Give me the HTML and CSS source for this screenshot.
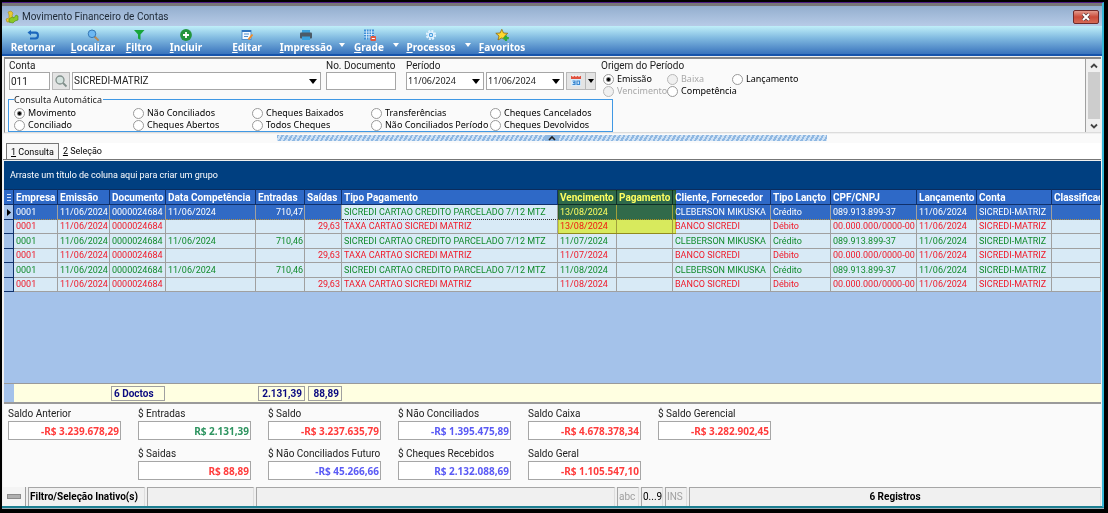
FILE: index.html
```html
<!DOCTYPE html>
<html lang="pt-BR">
<head>
    <meta charset="UTF-8">
    <meta name="viewport" content="width=device-width, initial-scale=1.0">
    <title>Movimento Financeiro de Contas</title>
    <link rel="stylesheet" href="styles.css">
</head>
<body>

<div class="window">
    <!-- Barra de título -->
    <header class="titlebar">
        <svg class="title-icon" viewBox="0 0 14 14">
            <path d="M1 9 L4 8 V5 L3 2 L6 1 L8 3 L7 6 L9 8 L6 12 L2 12 Z" fill="#e9c92f" stroke="#a98d1b" stroke-width=".6"/>
            <path d="M4 9 L7 7 L9 8 L11 5 L13 6 V10 L10 11 L8 13 L4 12 Z" fill="#8ac926" stroke="#4c8a14" stroke-width=".6"/>
        </svg>
        <h1>Movimento Financeiro de Contas</h1>
        <button class="close" aria-label="Fechar">
            <svg viewBox="0 0 10 8"><path d="M2 1 L8 7 M8 1 L2 7" stroke="#5b3a3a" stroke-width="3.4"/><path d="M2 1 L8 7 M8 1 L2 7" stroke="#fff" stroke-width="2"/></svg>
        </button>
    </header>

    <!-- Barra de ferramentas -->
    <nav class="toolbar">
        <button class="tool">
            <svg viewBox="0 0 14 12"><path d="M5 1 L1.500 3.500 L5 6.500 V4.800 H9.500 Q11 4.800 11 6.500 Q11 8.500 9 8.500 H4 V10.500 H9.500 Q13 10.300 13 6.500 Q13 2.600 9.500 2.600 H5 Z" fill="#1c67bd"/></svg>
            <span>Retornar</span>
        </button>
        <button class="tool">
            <svg viewBox="0 0 14 12"><path d="M8.500 7.500 L12 11" stroke="#b98a55" stroke-width="2" stroke-linecap="round"/><circle cx="6" cy="4.800" r="3.800" fill="#6db8f2" stroke="#3577b5"/></svg>
            <span><u>L</u>ocalizar</span>
        </button>
        <button class="tool">
            <svg viewBox="0 0 14 12"><path d="M2 1 H12.500 L8.500 5.500 V11 L6 9.500 V5.500 Z" fill="#17a53a"/></svg>
            <span><u>F</u>iltro</span>
        </button>
        <button class="tool">
            <svg viewBox="0 0 14 12"><circle cx="7" cy="6" r="5.900" fill="#23953c"/><path d="M7 3 V9 M4 6 H10" stroke="#fff" stroke-width="1.800"/></svg>
            <span><u>I</u>ncluir</span>
        </button>
        <button class="tool">
            <svg viewBox="0 0 14 12"><rect x="2" y="1.500" width="9" height="9" fill="#f4f9ff" stroke="#4f8fd0"/><path d="M2 2 H11" stroke="#2f74c0" stroke-width="2"/><path d="M4 5 H9 M4 7.500 H8" stroke="#4f8fd0"/><path d="M12.500 5.500 L8.500 10.500" stroke="#f28c28" stroke-width="2"/></svg>
            <span><u>E</u>ditar</span>
        </button>
        <button class="tool">
            <svg viewBox="0 0 14 12"><rect x="3" y="1" width="8" height="3" fill="#3a9ed8"/><rect x="1" y="3.500" width="12" height="6" rx="1" fill="#4b5a66"/><rect x="3" y="7.500" width="8" height="3.500" fill="#39a0dc"/></svg>
            <span><u>I</u>mpressão</span>
        </button>
        <button class="drop" aria-label="Opções de impressão"></button>
        <button class="tool">
            <svg viewBox="0 0 14 12"><rect x="2" y=".5" width="10" height="10" fill="#3d8fd8"/><path d="M2 3 H12 M2 5.500 H12 M2 8 H12 M4.500 .5 V10.500 M7 .5 V10.500 M9.500 .5 V10.500" stroke="#dff0fc" stroke-width=".8"/><rect x="8.500" y="7" width="5.500" height="5" rx="1" fill="#e2563c"/><path d="M9.800 9.500 H12.800" stroke="#fff"/></svg>
            <span><u>G</u>rade</span>
        </button>
        <button class="drop" aria-label="Opções de grade"></button>
        <button class="tool">
            <svg viewBox="0 0 14 12"><circle cx="7" cy="6" r="4.300" fill="none" stroke="#e6f4ff" stroke-width="1.600" stroke-dasharray="2 1.370"/><circle cx="7" cy="6" r="2.900" fill="#4da0e0" stroke="#e6f4ff" stroke-width="1.400"/><circle cx="7" cy="6" r="1.100" fill="#e6f4ff"/></svg>
            <span><u>P</u>rocessos</span>
        </button>
        <button class="drop" aria-label="Opções de processos"></button>
        <button class="tool">
            <svg viewBox="0 0 14 12"><path d="M6.800 .3 L8.500 4 L12.800 4.300 L9.600 7 L10.700 11 L6.800 8.900 L3 11 L4 7 L.8 4.300 L5.100 4 Z" fill="#ffd92e" stroke="#8f6a12" stroke-width=".8"/><path d="M11 6.500 V12 M8.300 9.200 H13.800" stroke="#2fae3a" stroke-width="2.200"/></svg>
            <span><u>F</u>avoritos</span>
        </button>
    </nav>

    <!-- Filtros -->
    <section class="filters">
        <form class="filter-form">
            <div class="fields">
                <div class="field account">
                    <label for="conta">Conta</label>
                    <div class="row">
                        <input type="text" id="conta" value="011">
                        <button type="button" class="search" aria-label="Procurar conta">
                            <svg viewBox="0 0 14 14"><circle cx="6" cy="6" r="4" fill="#d5e3df" stroke="#82908c" stroke-width="1.300"/><path d="M9 9 L12.500 12.500" stroke="#82908c" stroke-width="1.800"/></svg>
                        </button>
                        <div class="combo combo-name">
                            <select aria-label="Nome da conta"><option>SICREDI-MATRIZ</option></select>
                        </div>
                    </div>
                </div>
                <div class="field document">
                    <label for="documento">No. Documento</label>
                    <input type="text" id="documento">
                </div>
                <div class="field period">
                    <label for="inicio">Período</label>
                    <div class="row">
                        <div class="combo combo-date">
                            <select id="inicio"><option>11/06/2024</option></select>
                        </div>
                        <div class="combo combo-date">
                            <select aria-label="Data final"><option>11/06/2024</option></select>
                        </div>
                        <button type="button" class="calendar" aria-label="Calendário">
                            <svg viewBox="0 0 12 12"><rect x="1" y="1" width="10" height="10" fill="#d9ecfb"/><rect x="1" y="1" width="10" height="3" fill="#e0523f"/><path d="M3 0 V2 M6 0 V2 M9 0 V2" stroke="#fff"/><path d="M2.500 6 H5 V9.500 H2.500 M3 7.700 H5 M7 6 H9.500 V9.500 H7 Z" fill="none" stroke="#3a87d0" stroke-width="1.200"/></svg>
                        </button>
                        <button type="button" class="calendar-drop" aria-label="Mais períodos"></button>
                    </div>
                </div>
                <fieldset class="origin">
                    <legend>Origem do Período</legend>
                    <label class="radio"><input type="radio" name="origem" checked><span>Emissão</span></label>
                    <label class="radio off"><input type="radio" name="origem" disabled><span>Baixa</span></label>
                    <label class="radio"><input type="radio" name="origem"><span>Lançamento</span></label>
                    <label class="radio off"><input type="radio" name="origem" disabled><span>Vencimento</span></label>
                    <label class="radio"><input type="radio" name="origem"><span>Competência</span></label>
                </fieldset>
            </div>
            <fieldset class="auto-query">
                <legend>Consulta Automática</legend>
                <label class="radio"><input type="radio" name="consulta" checked><span>Movimento</span></label>
                <label class="radio"><input type="radio" name="consulta"><span>Não Conciliados</span></label>
                <label class="radio"><input type="radio" name="consulta"><span>Cheques Baixados</span></label>
                <label class="radio"><input type="radio" name="consulta"><span>Transferências</span></label>
                <label class="radio"><input type="radio" name="consulta"><span>Cheques Cancelados</span></label>
                <label class="radio"><input type="radio" name="consulta"><span>Conciliado</span></label>
                <label class="radio"><input type="radio" name="consulta"><span>Cheques Abertos</span></label>
                <label class="radio"><input type="radio" name="consulta"><span>Todos Cheques</span></label>
                <label class="radio"><input type="radio" name="consulta"><span>Não Conciliados Período</span></label>
                <label class="radio"><input type="radio" name="consulta"><span>Cheques Devolvidos</span></label>
            </fieldset>
        </form>
        <div class="scrollbar">
            <svg viewBox="0 0 12 12"><path d="M3 8 L6 5 L9 8" fill="none" stroke="#444" stroke-width="1.800"/></svg>
            <div class="thumb"></div>
            <svg viewBox="0 0 12 12"><path d="M3 5 L6 8 L9 5" fill="none" stroke="#444" stroke-width="1.800"/></svg>
        </div>
    </section>

    <div class="splitter">
        <button class="handle" aria-label="Recolher filtros">
            <svg viewBox="0 0 14 6"><path d="M4 5 L7 2 L10 5" fill="none" stroke="#222" stroke-width="1.600"/></svg>
        </button>
    </div>

    <!-- Abas -->
    <div class="tabs">
        <button class="tab active"><u>1</u> Consulta</button>
        <button class="tab"><u>2</u> Seleção</button>
    </div>

    <!-- Grade -->
    <main class="grid">
        <div class="group-bar">Arraste um título de coluna aqui para criar um grupo</div>
        <div class="grid-body">
            <table>
                <colgroup>
                    <col class="c-mark"><col class="c-empresa"><col class="c-emissao"><col class="c-documento">
                    <col class="c-competencia"><col class="c-entradas"><col class="c-saidas"><col class="c-tipo">
                    <col class="c-vencimento"><col class="c-pagamento"><col class="c-cliente"><col class="c-lancto">
                    <col class="c-cpf"><col class="c-lancamento"><col class="c-conta"><col>
                </colgroup>
                <thead>
                    <tr>
                        <th class="mark"><svg viewBox="0 0 6 9"><path d="M1 1.500 H5 M1 4.500 H5 M1 7.500 H5" stroke="#cfe0ff"/></svg></th>
                        <th>Empresa</th><th>Emissão</th><th>Documento</th><th>Data Competência</th><th>Entradas</th><th>Saídas</th><th>Tipo Pagamento</th>
                        <th>Vencimento</th><th>Pagamento</th><th>Cliente, Fornecedor</th><th>Tipo Lançto</th><th>CPF/CNPJ</th><th>Lançamento</th><th>Conta</th><th>Classificação</th>
                    </tr>
                </thead>
                <tbody>
                    <tr class="credit selected">
                        <td class="mark"><svg viewBox="0 0 6 9"><path d="M1 1 L5 4.500 L1 8 Z" fill="#000"/></svg></td>
                        <td>0001</td><td>11/06/2024</td><td>0000024684</td><td>11/06/2024</td><td class="num">710,47</td><td></td><td class="focus">SICREDI CARTAO CREDITO PARCELADO 7/12 MTZ</td>
                        <td>13/08/2024</td><td></td><td>CLEBERSON MIKUSKA</td><td>Crédito</td><td>089.913.899-37</td><td>11/06/2024</td><td>SICREDI-MATRIZ</td><td></td>
                    </tr>
                    <tr class="debit">
                        <td class="mark"></td>
                        <td>0001</td><td>11/06/2024</td><td>0000024684</td><td></td><td></td><td class="num">29,63</td><td>TAXA CARTAO SICREDI MATRIZ</td>
                        <td>13/08/2024</td><td></td><td>BANCO SICREDI</td><td>Débito</td><td>00.000.000/0000-00</td><td>11/06/2024</td><td>SICREDI-MATRIZ</td><td></td>
                    </tr>
                    <tr class="credit">
                        <td class="mark"></td>
                        <td>0001</td><td>11/06/2024</td><td>0000024684</td><td>11/06/2024</td><td class="num">710,46</td><td></td><td>SICREDI CARTAO CREDITO PARCELADO 7/12 MTZ</td>
                        <td>11/07/2024</td><td></td><td>CLEBERSON MIKUSKA</td><td>Crédito</td><td>089.913.899-37</td><td>11/06/2024</td><td>SICREDI-MATRIZ</td><td></td>
                    </tr>
                    <tr class="debit">
                        <td class="mark"></td>
                        <td>0001</td><td>11/06/2024</td><td>0000024684</td><td></td><td></td><td class="num">29,63</td><td>TAXA CARTAO SICREDI MATRIZ</td>
                        <td>11/07/2024</td><td></td><td>BANCO SICREDI</td><td>Débito</td><td>00.000.000/0000-00</td><td>11/06/2024</td><td>SICREDI-MATRIZ</td><td></td>
                    </tr>
                    <tr class="credit">
                        <td class="mark"></td>
                        <td>0001</td><td>11/06/2024</td><td>0000024684</td><td>11/06/2024</td><td class="num">710,46</td><td></td><td>SICREDI CARTAO CREDITO PARCELADO 7/12 MTZ</td>
                        <td>11/08/2024</td><td></td><td>CLEBERSON MIKUSKA</td><td>Crédito</td><td>089.913.899-37</td><td>11/06/2024</td><td>SICREDI-MATRIZ</td><td></td>
                    </tr>
                    <tr class="debit">
                        <td class="mark"></td>
                        <td>0001</td><td>11/06/2024</td><td>0000024684</td><td></td><td></td><td class="num">29,63</td><td>TAXA CARTAO SICREDI MATRIZ</td>
                        <td>11/08/2024</td><td></td><td>BANCO SICREDI</td><td>Débito</td><td>00.000.000/0000-00</td><td>11/06/2024</td><td>SICREDI-MATRIZ</td><td></td>
                    </tr>
                </tbody>
            </table>
            <div class="marker"></div>
        </div>
        <div class="grid-footer">
            <span class="foot-mark"></span>
            <span class="total total-docs">6 Doctos</span>
            <span class="total total-in">2.131,39</span>
            <span class="total total-out">88,89</span>
        </div>
    </main>

    <!-- Saldos -->
    <section class="balances">
        <div class="balance"><label for="s1">Saldo Anterior</label><input type="text" id="s1" class="red" value="-R$ 3.239.678,29" readonly></div>
        <div class="balance"><label for="s2">$ Entradas</label><input type="text" id="s2" class="green" value="R$ 2.131,39" readonly></div>
        <div class="balance"><label for="s3">$ Saldo</label><input type="text" id="s3" class="red" value="-R$ 3.237.635,79" readonly></div>
        <div class="balance"><label for="s4">$ Não Conciliados</label><input type="text" id="s4" class="blue" value="-R$ 1.395.475,89" readonly></div>
        <div class="balance"><label for="s5">Saldo Caixa</label><input type="text" id="s5" class="red" value="-R$ 4.678.378,34" readonly></div>
        <div class="balance"><label for="s6">$ Saldo Gerencial</label><input type="text" id="s6" class="red" value="-R$ 3.282.902,45" readonly></div>
        <div class="balance second"><label for="s7">$ Saidas</label><input type="text" id="s7" class="red" value="R$ 88,89" readonly></div>
        <div class="balance"><label for="s8">$ Não Conciliados Futuro</label><input type="text" id="s8" class="blue" value="-R$ 45.266,66" readonly></div>
        <div class="balance"><label for="s9">$ Cheques Recebidos</label><input type="text" id="s9" class="blue" value="R$ 2.132.088,69" readonly></div>
        <div class="balance"><label for="s10">Saldo Geral</label><input type="text" id="s10" class="red" value="-R$ 1.105.547,10" readonly></div>
    </section>

    <!-- Barra de status -->
    <footer class="status">
        <button class="status-btn" aria-label="Painel"><span></span></button>
        <span class="panel strong">Filtro/Seleção Inativo(s)</span>
        <span class="panel"></span>
        <span class="panel"></span>
        <span class="panel dim">abc</span>
        <span class="panel">0...9</span>
        <span class="panel dim">INS</span>
        <span class="panel strong count">6 Registros</span>
    </footer>
</div>

</body>
</html>
```

FILE: styles.css
```css
* {
    box-sizing: border-box;
}
body {
    margin: 0;
    min-height: 100vh;
    display: flex;
    padding: 2px 4px 5px 2px;
    background-color: #000000;
    font-family: Roboto, sans-serif;
    font-size: 10px;
    line-height: 12px;
    color: #222222;
}
button, input, select {
    font: inherit;
    color: inherit;
    margin: 0;
    padding: 0;
    border: none;
    border-radius: 0;
}
button {
    background: none;
}
.window {
    flex: 1;
    min-width: 0;
    display: flex;
    flex-direction: column;
    padding: 0 1px 0 1px;
    border-top: 1px solid #4b1c86;
    border-right: 2px solid #35b6d6;
    border-bottom: 2px solid #1c7f92;
    background-color: #f0f0f0;
    box-shadow: 0 1px 0 #9fb0b8;
}

/* Título */
.titlebar {
    display: flex;
    align-items: center;
    height: 23px;
    margin: 0 -1px;
    padding: 2px 3px 0 3px;
    border-top: 3px solid #777777;
    background: linear-gradient(#93aece, #b7cbe7);
}
.title-icon {
    width: 14px;
    height: 14px;
}
.titlebar h1 {
    flex: 1;
    margin: 0 0 0 3px;
    font-size: 10px;
    font-weight: normal;
    line-height: 14px;
    color: #1c2734;
}
.close {
    display: flex;
    align-items: center;
    justify-content: center;
    width: 26px;
    height: 14px;
    border: 1px solid #6d2a2a;
    border-radius: 2px;
    background: linear-gradient(#e29a8c, #cb4b3a 50%, #d56a55);
}
.close svg {
    width: 10px;
    height: 8px;
}

/* Ferramentas */
.toolbar {
    display: grid;
    grid-template-columns: 58px 62px 30px 64px 58px 60px 12px 42px 12px 58px 16px 52px;
    height: 30px;
    margin: 0 -1px;
    padding: 3px 1px 0 2px;
    border-bottom: 2px solid #1654ab;
    background: linear-gradient(#c0eff9, #82bbe1 42%, #3a74bd);
}
.tool {
    display: flex;
    flex-direction: column;
    align-items: center;
    color: #ffffff;
    font-family: "Noto Sans", sans-serif;
    font-weight: bold;
    line-height: 12px;
    white-space: nowrap;
}
.tool svg {
    flex: none;
    width: 14px;
    height: 12px;
}
.drop {
    padding-top: 6px;
}
.drop::before, .calendar-drop::before {
    content: "";
    display: block;
    width: 0;
    margin: auto;
    border: 3px solid transparent;
    border-bottom: none;
    border-top: 4px solid #ffffff;
}

/* Filtros */
.filters {
    display: flex;
    margin: 1px 0 0 1px;
    border-top: 2px solid #8a8a8a;
    border-left: 1px solid #8a8a8a;
    border-bottom: 1px solid #dcdcdc;
    background-color: #fafafa;
}
.filter-form {
    flex: 1;
    padding-left: 3px;
}
.fields {
    display: flex;
    height: 35px;
    padding-left: 1px;
}
.field label {
    display: block;
    height: 13px;
    line-height: 14px;
}
.account {
    width: 317px;
}
.document {
    width: 80px;
}
.period {
    width: 195px;
}
.row {
    display: flex;
    gap: 2px;
}
.field input, .field select {
    height: 18px;
    padding: 0 1px;
    border: 1px solid #a6a6a6;
    background-color: #ffffff;
}
.account input {
    width: 41px;
}
.document input {
    width: 70px;
}
.search {
    display: flex;
    align-items: center;
    justify-content: center;
    width: 18px;
    height: 18px;
    border: 1px solid #b8b8b8;
    background-color: #e4e4e4;
}
.search svg {
    width: 14px;
    height: 14px;
}
.combo {
    position: relative;
}
.combo select {
    width: 100%;
    appearance: none;
}
.combo::after {
    content: "";
    position: absolute;
    top: 7px;
    right: 4px;
    border: 4px solid transparent;
    border-bottom: none;
    border-top: 5px solid #000000;
    pointer-events: none;
}
.combo-name {
    width: 249px;
}
.combo-date {
    width: 78px;
}
.combo-date select {
    font-family: "Noto Sans", sans-serif;
    font-size: 9px;
}
.calendar, .calendar-drop {
    height: 18px;
    border: 1px solid #b8b8b8;
    background-color: #e4e4e4;
}
.calendar {
    display: flex;
    align-items: center;
    justify-content: center;
    width: 20px;
}
.calendar svg {
    width: 12px;
    height: 12px;
}
.calendar-drop {
    width: 11px;
    margin-left: -3px;
}
.calendar-drop::before {
    border-top-color: #000000;
}
fieldset {
    margin: 0;
    padding: 0;
    border: none;
    min-width: 0;
}
legend {
    padding: 0;
}
.origin {
    display: grid;
    grid-template-columns: 64px 65px 90px;
    grid-auto-rows: 12px;
    height: 36px;
}
.origin legend {
    line-height: 14px;
}
.origin label {
    margin-left: 2px;
}
.auto-query {
    display: grid;
    grid-template-columns: repeat(5, 119px);
    grid-auto-rows: 12px;
    width: 605px;
    padding: 2px 0 0 5px;
    border: 1px solid #4098e4;
}
.auto-query legend {
    padding-right: 1px;
    font-family: "Noto Sans", sans-serif;
    font-size: 9px;
    line-height: 11px;
}
.radio {
    display: flex;
    align-items: center;
    gap: 3px;
    white-space: nowrap;
    font-family: "Noto Sans", sans-serif;
    font-size: 9px;
    line-height: 12px;
    color: #000000;
}
.radio input {
    flex: none;
    appearance: none;
    width: 11px;
    height: 11px;
    border: 1px solid #9a9a9a;
    border-radius: 50%;
    background-color: #ffffff;
}
.radio input:checked {
    background: radial-gradient(circle, #000000 1px, #ffffff 3px);
}
.radio.off {
    color: #a8a8a8;
}
.radio.off input {
    border-color: #b8b8b8;
    background-color: #f0f0f0;
}
.scrollbar {
    display: flex;
    flex-direction: column;
    align-items: center;
    width: 16px;
    border-left: 1px solid #a0a0a0;
    background-color: #f0f0f0;
}
.scrollbar svg {
    width: 12px;
    height: 13px;
}
.thumb {
    flex: 1;
    width: 12px;
    background-color: #cdcdcd;
}

/* Divisor */
.splitter {
    display: flex;
    justify-content: center;
    height: 9px;
    margin-top: 1px;
    padding-top: 1px;
    background-color: #fafafa;
}
.handle {
    display: flex;
    justify-content: center;
    width: 550px;
    height: 6px;
    background: repeating-linear-gradient(120deg, #8fb8e2 0 2px, #cfe2f6 2px 4px);
}
.handle svg {
    width: 14px;
    height: 6px;
    background-color: #8fb8e2;
}

/* Abas */
.tabs {
    display: flex;
    height: 17px;
    padding-left: 3px;
    border-bottom: 1px solid #777777;
    background-color: #ffffff;
}
.tab {
    padding: 0 4px;
    font-size: 9px;
    color: #000000;
}
.tab.active {
    border: 1px solid #777777;
    border-bottom: none;
    background-color: #f7f7f7;
}

/* Grade */
.grid {
    flex: 1;
    display: flex;
    flex-direction: column;
    margin: 1px 0 0 1px;
    background-color: #a4c2ea;
}
.group-bar {
    height: 28px;
    padding-left: 6px;
    background-color: #003f80;
    color: #ffffff;
    font-size: 9px;
    line-height: 29px;
}
.grid-body {
    position: relative;
    flex: 1;
    min-height: 140px;
    overflow: hidden;
}
table {
    width: 100%;
    table-layout: fixed;
    border-collapse: separate;
    border-spacing: 0;
    font-size: 9px;
}
.c-mark { width: 10px; }
.c-empresa { width: 44px; }
.c-emissao { width: 52px; }
.c-documento { width: 56px; }
.c-competencia { width: 90px; }
.c-entradas { width: 49px; }
.c-saidas { width: 37px; }
.c-tipo { width: 216px; }
.c-vencimento { width: 59px; }
.c-pagamento { width: 56px; }
.c-cliente { width: 98px; }
.c-lancto { width: 60px; }
.c-cpf { width: 86px; }
.c-lancamento { width: 60px; }
.c-conta { width: 75px; }
th, td {
    padding: 0 0 0 2px;
    overflow: hidden;
    white-space: nowrap;
    line-height: 13px;
    text-align: left;
}
th {
    height: 16px;
    border-right: 1px solid #10306a;
    border-top: 1px solid #0a2c5e;
    border-bottom: 1px solid #10306a;
    background-color: #2e69c7;
    color: #ffffff;
    font-size: 10px;
}
td {
    height: 15px;
    border-right: 1px solid #a0a0a0;
    border-bottom: 1px solid #a0a0a0;
    background-color: #d8eaf6;
}
tr:nth-child(even) td {
    height: 14px;
}
.credit td {
    color: #118a2b;
}
.debit td {
    color: #f01828;
}
.selected td {
    background-color: #316ac5;
    border-bottom: 1px dotted #b08f4a;
    color: #ffffff;
}
.selected td.focus {
    background-color: #d8eaf6;
    color: #118a2b;
    border-bottom: 1px dotted #333333;
}
td.mark, .selected td.mark {
    border-right: 1px solid #10306a;
    border-bottom: 1px solid #10306a;
    background-color: #a4c2ea;
}
.mark svg {
    display: block;
    width: 6px;
    height: 9px;
}
td.num {
    padding-right: 1px;
    text-align: right;
}
.marker {
    position: absolute;
    top: 1px;
    left: 554px;
    width: 118px;
    height: 44px;
    border: 1px solid #e8dc30;
    background-color: #ffff60;
    mix-blend-mode: multiply;
}
.grid-footer {
    display: flex;
    align-items: center;
    height: 21px;
    border-top: 1px solid #9a9a9a;
    border-bottom: 2px solid #9a9a9a;
    background-color: #ffffe1;
    color: #0a0a80;
    font-weight: bold;
}
.foot-mark {
    align-self: stretch;
    width: 10px;
    background-color: #a4c2ea;
}
.total {
    height: 15px;
    padding: 0 2px;
    border: 1px solid #a0a0a0;
    line-height: 14px;
}
.total-docs {
    width: 54px;
    margin-left: 97px;
}
.total-in {
    width: 47px;
    margin-left: 93px;
    text-align: right;
}
.total-out {
    width: 34px;
    margin-left: 3px;
    text-align: right;
}

/* Saldos */
.balances {
    display: grid;
    grid-template-columns: repeat(6, 113px);
    column-gap: 17px;
    row-gap: 7px;
    padding: 3px 5px 7px 5px;
    background-color: #fafafa;
}
.balance label {
    display: block;
    height: 14px;
    line-height: 13px;
    white-space: nowrap;
}
.balance input {
    display: block;
    width: 100%;
    height: 19px;
    padding: 0 1px;
    border: 1px solid #a6a6a6;
    background-color: #ffffff;
    font-family: "Noto Sans", sans-serif;
    font-weight: bold;
    text-align: right;
}
.second {
    grid-column: 2;
}
.balance .red { color: #ff3c3c; }
.balance .green { color: #2e9460; }
.balance .blue { color: #5a5af5; }

/* Status */
.status {
    display: grid;
    grid-template-columns: 23px 117px 107px 359px 22px 22px 22px 1fr;
    column-gap: 2px;
    height: 19px;
    color: #000000;
}
.status-btn {
    border-right: 1px solid #a0a0a0;
    background-color: #f4f4f4;
}
.status-btn span {
    display: block;
    width: 14px;
    height: 5px;
    margin: 0 4px;
    border: 1px solid #8c8c8c;
    background-color: #b0b0b0;
}
.panel {
    padding: 0 1px;
    border-top: 1px solid #a6a6a6;
    border-left: 1px solid #a6a6a6;
    border-right: 1px solid #dddddd;
    line-height: 17px;
    white-space: nowrap;
}
.strong {
    font-weight: bold;
}
.dim {
    color: #a0a0a0;
}
.count {
    text-align: center;
}
```
